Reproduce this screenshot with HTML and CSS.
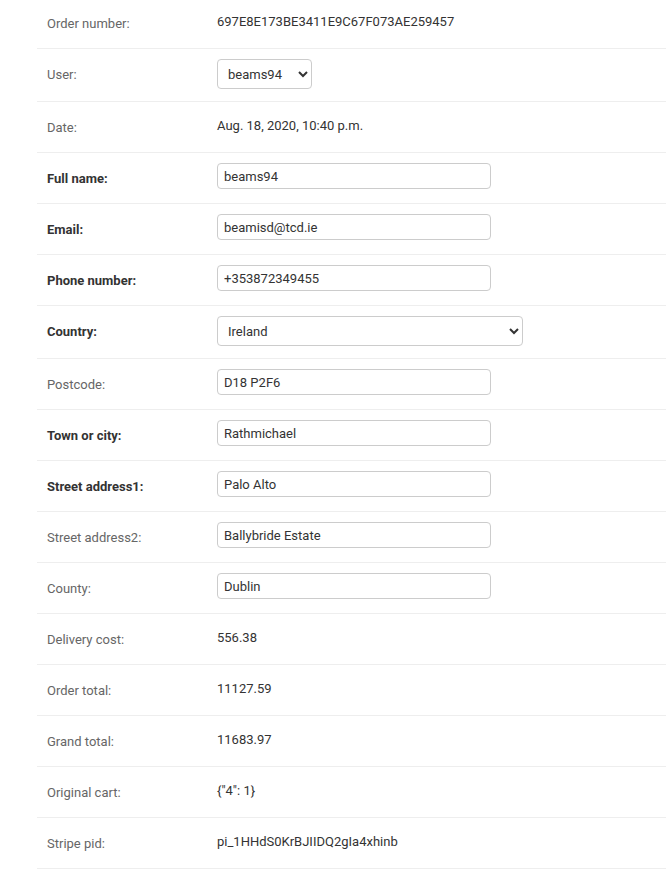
FILE: index.html
```html
<!DOCTYPE html>
<html>
<head>
<meta charset="utf-8">
<link rel="stylesheet" href="styles.css">
</head>
<body>
<div class="module">
  <div class="form-row"><label class="lbl">Order number:</label><div class="readonly">697E8E173BE3411E9C67F073AE259457</div></div>
  <div class="form-row form-row--select"><label class="lbl">User:</label><select class="sel sel-user"><option>beams94</option></select></div>
  <div class="form-row"><label class="lbl">Date:</label><div class="readonly">Aug. 18, 2020, 10:40 p.m.</div></div>
  <div class="form-row"><label class="lbl required">Full name:</label><input class="txt" type="text" value="beams94"></div>
  <div class="form-row"><label class="lbl required">Email:</label><input class="txt" type="text" value="beamisd@tcd.ie"></div>
  <div class="form-row"><label class="lbl required">Phone number:</label><input class="txt" type="text" value="+353872349455"></div>
  <div class="form-row form-row--select"><label class="lbl required">Country:</label><select class="sel sel-country"><option>Ireland</option></select></div>
  <div class="form-row"><label class="lbl">Postcode:</label><input class="txt" type="text" value="D18 P2F6"></div>
  <div class="form-row"><label class="lbl required">Town or city:</label><input class="txt" type="text" value="Rathmichael"></div>
  <div class="form-row"><label class="lbl required">Street address1:</label><input class="txt" type="text" value="Palo Alto"></div>
  <div class="form-row"><label class="lbl">Street address2:</label><input class="txt" type="text" value="Ballybride Estate"></div>
  <div class="form-row"><label class="lbl">County:</label><input class="txt" type="text" value="Dublin"></div>
  <div class="form-row"><label class="lbl">Delivery cost:</label><div class="readonly">556.38</div></div>
  <div class="form-row"><label class="lbl">Order total:</label><div class="readonly">11127.59</div></div>
  <div class="form-row"><label class="lbl">Grand total:</label><div class="readonly">11683.97</div></div>
  <div class="form-row"><label class="lbl">Original cart:</label><div class="readonly">{"4": 1}</div></div>
  <div class="form-row"><label class="lbl">Stripe pid:</label><div class="readonly">pi_1HHdS0KrBJIIDQ2gIa4xhinb</div></div>
</div>
</body>
</html>
```
FILE: styles.css
```css
html, body {
  margin: 0;
  padding: 0;
  background: #fff;
}
body {
  font-family: Roboto, "Liberation Sans", sans-serif;
  font-size: 13px;
  color: #333;
  overflow: hidden;
}
.module {
  margin-top: -2px;
  padding-left: 37px;
}
.form-row {
  display: flex;
  align-items: flex-start;
  padding: 10px;
  min-height: 30px;
  border-bottom: 1px solid #eee;
}
.form-row--select {
  padding-bottom: 12px;
}
.lbl {
  display: block;
  flex: 0 0 160px;
  width: 160px;
  padding: 9px 10px 0 0;
  line-height: 1;
  color: #666;
}
.lbl.required {
  font-weight: bold;
  color: #333;
}
.readonly {
  padding: 6px 0;
  line-height: 16px;
  color: #333;
}
.txt {
  box-sizing: border-box;
  width: 274px;
  height: 26px;
  margin: 0;
  padding: 5px 6px;
  border: 1px solid #ccc;
  border-radius: 4px;
  font-family: Roboto, "Liberation Sans", sans-serif;
  font-size: 13px;
  color: #333;
  background: #fff;
}
.sel {
  box-sizing: border-box;
  height: 30px;
  margin: 0;
  padding: 5px 6px;
  border: 1px solid #ccc;
  border-radius: 4px;
  font-family: Roboto, "Liberation Sans", sans-serif;
  font-size: 13px;
  color: #333;
  background: #fff;
}
.sel-user {
  width: 95px;
}
.sel-country {
  width: 306px;
}
```
